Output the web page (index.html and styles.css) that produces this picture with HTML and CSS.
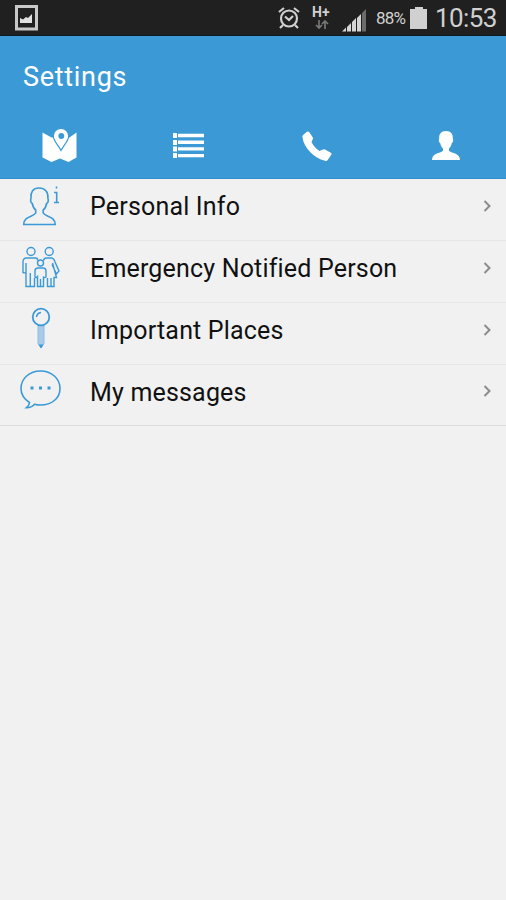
FILE: index.html
```html
<!DOCTYPE html>
<html lang="en">
<head>
<meta charset="utf-8">
<title>Settings</title>
<link rel="stylesheet" href="styles.css">
</head>
<body>
<div class="status">
  <svg class="shot" width="23" height="26" viewBox="0 0 23 26"><rect x="1.500" y="1.500" width="20" height="22.500" fill="none" stroke="#c8c8c8" stroke-width="3"/><path d="M5 18v-5l3 1.500 3-2.500 2 1 4-4v9z" fill="#e0e0e0"/></svg>
  <svg class="alarm" width="22" height="24" viewBox="0 0 22 24" fill="none" stroke="#d0d0d0" stroke-width="2.200"><circle cx="11" cy="12.500" r="8"/><path d="M7 10.500l4 3.500 4-4M1 6l5-4M21 6l-5-4M5 19l-3 3M17 19l3 3"/></svg>
  <div class="network"><span class="hplus">H+</span><svg width="14" height="10" viewBox="0 0 14 10" fill="none" stroke="#777" stroke-width="1.700"><path d="M4 0v8M1 5l3 3 3-3M10 9V1M7 4l3-3 3 3"/></svg></div>
  <svg class="signal" width="25" height="24" viewBox="0 0 25 24"><path d="M0 23.500l4-4v4zM5 19l4-4v8.500H5zM10 14l4-4v13.500h-4zM15 10l4-4v17.500h-4z" fill="#d5d5d5"/><path d="M20 5l4-4v22.500h-4z" fill="#6b6b6b"/></svg>
  <span class="percent">88%</span>
  <svg class="battery" width="18" height="22" viewBox="0 0 18 22"><path d="M5 0h8v2h4v20H0V2h5z" fill="#d0d0d0"/></svg>
  <span class="clock">10:53</span>
</div>
<header class="header">
  <h1 class="title">Settings</h1>
  <nav class="tabs">
    <svg class="tab map" width="36" height="36" viewBox="0 0 36 36"><path d="M.5 4.500l9 5h18l7-5v25l-8 4.500-8.500-3.500-8.500 3.500-9-4.500z" fill="#fff"/><path d="M19 .3a7.700 7.700 0 0 0-7.700 7.700c0 5 5 9 7.700 14.500 2.700-5.500 7.700-9.500 7.700-14.500A7.700 7.700 0 0 0 19 .3z" fill="#fff" stroke="#3b9ad6" stroke-width="1.200"/><circle cx="19.300" cy="8" r="2.900" fill="#3b9ad6"/></svg>
    <svg class="tab list" width="32" height="26" viewBox="0 0 32 26" fill="#fff"><path d="M0 0h4v5H0zM0 7h4v5H0zM0 13.500h4v5H0zM0 20h4v5H0zM5 .8h26v3.400H5zM5 7.500h26v3.400H5zM5 14.200h26v3.400H5zM5 20.900h26v3.400H5z"/></svg>
    <svg class="tab phone" width="30" height="30" viewBox="0 0 30 30"><path d="M1 4L5 .8q1.200-.8 2.300.5l3.500 5.200q.7 1-.2 2.100L9.500 11q3 6 8 9l3.500-1.500q1-.6 2 .1l5.800 3.200q1.200.7.500 2l-3.800 5.500q-.8 1-2.500.5C12 27 2 17 .5 6.500Q.3 4.800 1 4z" fill="#fff"/></svg>
    <svg class="tab person" width="28" height="30" viewBox="0 0 28 30"><path d="M14 0c-5 0-7.200 3.200-6.800 7.500C6.300 9 7 11.500 8.300 12.300c.5 3 1.600 4.200 2.700 5.200v2.200C8 22.500 0 22 0 29h28c0-7-8-6.500-11-9.300v-2.200c1.100-1 2.200-2.200 2.700-5.200 1.300-.8 2-3.300 1.100-4.800C21.200 3.200 19 0 14 0z" fill="#fff"/></svg>
  </nav>
</header>
<main class="rows">
  <div class="row">
    <svg class="icon" viewBox="20 183 42 48"><path d="M39 188c-6 0-8.500 4-8 10-.8 3 .2 5 1.300 5.500.6 3.500 2 5.500 3.400 6.500v3c-2 4-12 3-12 11.500h31.500c0-8.500-10-7.500-12-11.500v-3c1.400-1 2.800-3 3.400-6.500 1.100-.5 2.100-2.500 1.300-5.500.5-6-2.900-10-8.900-10z"/><path d="M56.500 186.500v2M54 192.500h2.700v9.500M54 202.500h5"/></svg>
    <span class="label info">Personal Info</span>
    <svg class="chevron" viewBox="0 0 9 14"><path d="M1.500 2L6.500 7l-5 5"/></svg>
  </div>
  <div class="row">
    <svg class="icon family" viewBox="20 245 42 48"><circle cx="31" cy="251.500" r="4"/><circle cx="49.200" cy="251.500" r="4"/><circle cx="40.500" cy="263" r="3"/><path d="M37.500 260.500v-1q0-1.500-2-1.500h-9q-3.500 0-3.500 4v10.500q2.500 1 3-.5v-9M26 271v15.500h8.500V278M30.300 273v13.500M43.500 260.500q.5-2.500 3-2.500h4.500q3 0 4 4l4 9-2.500 3-4.500-9.500M52.500 263l4 14.500H54v9h-6.500V278M51 278v8.500"/><path d="M38 268h5q3 0 3 3v6q-2 1.500-2.500-.5v10h-6v-10q-2 2-2.500.5v-6q0-3 3-3zM40.500 279v7.500"/></svg>
    <span class="label emergency">Emergency Notified Person</span>
    <svg class="chevron" viewBox="0 0 9 14"><path d="M1.500 2L6.500 7l-5 5"/></svg>
  </div>
  <div class="row">
    <svg class="icon" viewBox="20 307 42 48"><path d="M38 325.500v18l3 4.500 3-4.500v-18z" fill="#a9cbe8" stroke="#8dbde2" stroke-width="1"/><path d="M38.500 344.500h5l-2.500 4z" fill="#3b9ad6" stroke="none"/><circle cx="41" cy="317" r="8.300" stroke-width="1.800"/><path d="M36.500 317q.5-4 4.500-4.500"/></svg>
    <span class="label places">Important Places</span>
    <svg class="chevron" viewBox="0 0 9 14"><path d="M1.500 2L6.500 7l-5 5"/></svg>
  </div>
  <div class="row">
    <svg class="icon" viewBox="20 369 42 48"><path d="M29.500 403.500C24 400 21 395 21 389.500c0-10 8.500-17.500 19.500-17.500S60 379.500 60 389.500 51.500 406 40.500 406c-2.500 0-4.500-.3-6-.8-2 2.300-4.500 3.500-8 3.500 2-1.700 3-3 3-5.200z"/><path d="M30.500 389h3M39 389h3M47.500 389h3" stroke-width="3"/></svg>
    <span class="label messages">My messages</span>
    <svg class="chevron" viewBox="0 0 9 14"><path d="M1.500 2L6.500 7l-5 5"/></svg>
  </div>
</main>
</body>
</html>
```
FILE: styles.css
```css
* { box-sizing: border-box; }
body { margin: 0; min-height: 900px; background: #f1f1f1; font-family: Roboto, "Liberation Sans", sans-serif; color: #111; }
svg { display: block; flex: none; }
.status { display: flex; height: 36px; background: #202020; color: #d0d0d0; border-bottom: 1px solid #101820; }
.shot { margin: 5px 0 0 15px; }
.alarm { margin: 6px 0 0 240px; }
.network { width: 22px; margin: 6px 0 0 12px; }
.network svg { margin: 1px 0 0 3px; }
.hplus { display: block; font-size: 14px; line-height: 13px; font-weight: 700; white-space: nowrap; }
.signal { margin: 8px 0 0 8px; }
.percent { width: 34px; margin-left: 9px; font-size: 17px; line-height: 37px; letter-spacing: -0.8px; }
.battery { margin: 7px 0 0 0; }
.clock { margin-left: 7px; font-size: 26px; line-height: 36px; letter-spacing: -0.6px; white-space: nowrap; }
.header { height: 143px; background: #3b9ad6; color: #fff; border-bottom: 1px solid #2f8fcc; }
.title { margin: 0; padding: 22px 0 0 23px; height: 90px; font-size: 27px; line-height: 38px; font-weight: 400; letter-spacing: 0.7px; }
.tabs { display: flex; }
.map { margin: 2px 0 0 42px; }
.list { margin: 7px 0 0 95px; }
.phone { margin: 5px 0 0 97px; }
.person { margin: 5px 0 0 100px; }
.row { display: flex; height: 62px; padding-left: 20px; border-bottom: 1px solid #e6e6e6; }
.row:last-child { height: 61px; border-bottom-color: #dddddd; }
.icon { width: 42px; height: 48px; margin-top: 4px; fill: none; stroke: #3b9ad6; stroke-width: 1.6; }
.row:last-child .icon { margin-top: 3px; }
.family { stroke-width: 1.4; }
.label { flex: 1; margin-left: 28px; font-size: 25px; line-height: 55px; white-space: nowrap; letter-spacing: 0.18px; }
.chevron { width: 9px; height: 14px; margin: 20px 14px 0 0; fill: none; stroke: #8c8c8c; stroke-width: 2; }
.row:last-child .chevron { margin-top: 19px; }
```
